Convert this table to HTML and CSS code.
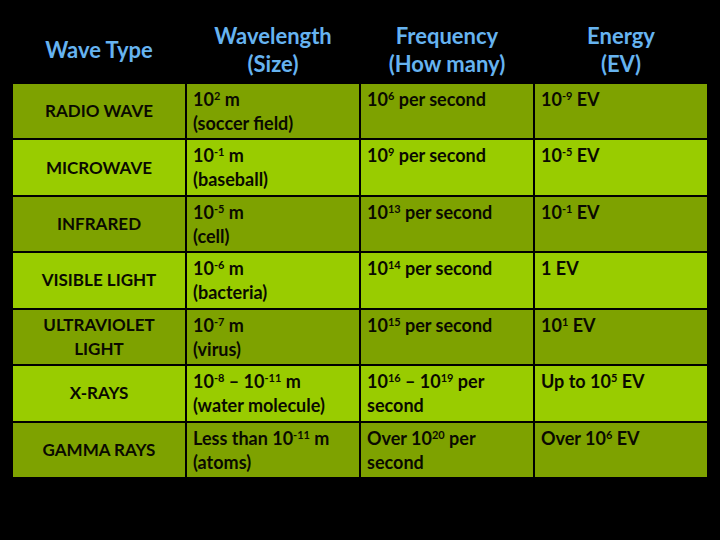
FILE: index.html
```html
<!DOCTYPE html>
<html>
<head>
<meta charset="utf-8">
<link rel="stylesheet" href="styles.css">
</head>
<body>
<div class="page">
  <div class="head">
    <div class="hcell">Wave Type</div>
    <div class="hcell">Wavelength<br>(Size)</div>
    <div class="hcell">Frequency<br>(How many)</div>
    <div class="hcell">Energy<br>(EV)</div>
  </div>
  <div class="table">
    <div class="c name dark">RADIO WAVE</div>
    <div class="c dark">10<sup>2</sup> m<br>(soccer field)</div>
    <div class="c dark">10<sup>6</sup> per second</div>
    <div class="c dark">10<sup>-9</sup> EV</div>

    <div class="c name light">MICROWAVE</div>
    <div class="c light">10<sup>-1</sup> m<br>(baseball)</div>
    <div class="c light">10<sup>9</sup> per second</div>
    <div class="c light">10<sup>-5</sup> EV</div>

    <div class="c name dark">INFRARED</div>
    <div class="c dark">10<sup>-5</sup> m<br>(cell)</div>
    <div class="c dark">10<sup>13</sup> per second</div>
    <div class="c dark">10<sup>-1</sup> EV</div>

    <div class="c name light">VISIBLE LIGHT</div>
    <div class="c light">10<sup>-6</sup> m<br>(bacteria)</div>
    <div class="c light">10<sup>14</sup> per second</div>
    <div class="c light">1 EV</div>

    <div class="c name dark">ULTRAVIOLET<br>LIGHT</div>
    <div class="c dark">10<sup>-7</sup> m<br>(virus)</div>
    <div class="c dark">10<sup>15</sup> per second</div>
    <div class="c dark">10<sup>1</sup> EV</div>

    <div class="c name light">X-RAYS</div>
    <div class="c light">10<sup>-8</sup> – 10<sup>-11</sup> m<br>(water molecule)</div>
    <div class="c light">10<sup>16</sup> – 10<sup>19</sup> per<br>second</div>
    <div class="c light">Up to 10<sup>5</sup> EV</div>

    <div class="c name dark">GAMMA RAYS</div>
    <div class="c dark">Less than 10<sup>-11</sup> m<br>(atoms)</div>
    <div class="c dark">Over 10<sup>20</sup> per<br>second</div>
    <div class="c dark">Over 10<sup>6</sup> EV</div>
  </div>
</div>
</body>
</html>
```
FILE: styles.css
```css
html, body {
  margin: 0;
  padding: 0;
  background: #000;
}
.page {
  width: 720px;
  height: 540px;
  background: #000;
  padding: 0 13px;
  box-sizing: border-box;
  font-family: Lato, "Open Sans", sans-serif;
}
.head {
  display: grid;
  grid-template-columns: 172px 172px 172px 172px;
  column-gap: 2px;
  height: 84px;
  box-sizing: border-box;
  padding-top: 18px;
}
.hcell {
  display: flex;
  align-items: center;
  justify-content: center;
  text-align: center;
  color: #66b3f0;
  font-size: 22px;
  font-weight: 700;
  line-height: 28px;
  padding-bottom: 2px;
}
.table {
  display: grid;
  grid-template-columns: 172px 172px 172px 172px;
  grid-template-rows: repeat(7, 1fr);
  gap: 2px;
  height: 393px;
  background: #000;
}
.c {
  color: #0a0a00;
  font-size: 18px;
  font-weight: 700;
  line-height: 24px;
  padding: 3px 6px 0 6px;
  box-sizing: border-box;
  overflow: hidden;
  white-space: nowrap;
}
.c sup {
  font-size: 11px;
  line-height: 0;
  vertical-align: 6px;
}
.name {
  display: flex;
  align-items: center;
  justify-content: center;
  text-align: center;
  font-size: 17px;
  padding: 0 4px;
}
.dark { background: #7ea200; }
.light { background: #99cc00; }
```
